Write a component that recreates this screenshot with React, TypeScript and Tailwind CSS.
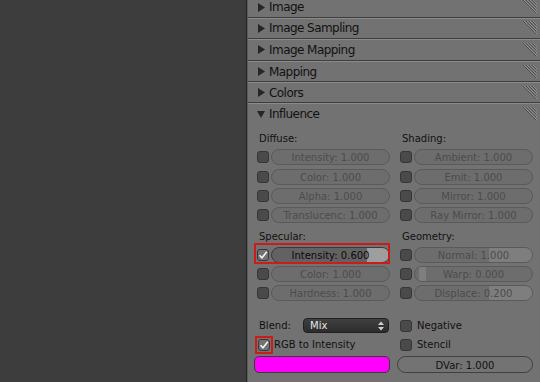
import React from 'react'

type SliderProps = { label: string; active?: boolean; fill?: [number, number] }

const Arrow = ({ open }: { open?: boolean }) =>
  open ? (
    <svg width="8" height="8" viewBox="0 0 8 8" className="shrink-0">
      <path d="M0 1 L8 1 L4 8 Z" fill="#262626" />
    </svg>
  ) : (
    <svg width="8" height="9" viewBox="0 0 8 9" className="shrink-0">
      <path d="M1 0 L8 4.5 L1 9 Z" fill="#262626" />
    </svg>
  )

// drag handle in panel header corner
const Hatch = () => (
  <svg width="15" height="14" viewBox="0 0 15 14" className="ml-auto shrink-0">
    {[0, 1, 2, 3].map((i) => (
      <g key={i}>
        <line x1={1 + 3 * i} y1={0} x2={14} y2={13 - 3 * i} stroke="#505050" strokeWidth="1" />
        <line x1={2 + 3 * i} y1={0} x2={15} y2={13 - 3 * i} stroke="#979797" strokeWidth="0.8" />
      </g>
    ))}
  </svg>
)

const Header = ({ title, open, h }: { title: string; open?: boolean; h: string }) => (
  <div>
    <div className={`flex items-center pl-[9px] pr-[3px] ${h}`}>
      <Arrow open={open} />
      <span className="ml-[4px] text-[12px] tracking-[-0.55px] text-[#111111] leading-none">{title}</span>
      <Hatch />
    </div>
    {!open && (
      <>
        <div className="h-px bg-[#3e3e3e]" />
        <div className="h-px bg-[#8b8b8b]" />
      </>
    )}
  </div>
)

const Checkbox = ({ checked }: { checked?: boolean }) =>
  checked ? (
    <div className="w-3 h-3 shrink-0 rounded-[3px] border border-[#383838] bg-[#727272] flex items-center justify-center">
      <svg width="10" height="10" viewBox="0 0 10 10">
        <path d="M1.5 5.2 L4 7.8 L8.8 1.8" stroke="#f4f4f4" strokeWidth="1.6" fill="none" />
      </svg>
    </div>
  ) : (
    <div className="w-3 h-3 shrink-0 rounded-[3px] border border-[#363636] bg-[#4a4a4a]" />
  )

const Slider = ({ label, active, fill }: SliderProps) => (
  <div
    className={`relative flex-1 h-4 rounded-full overflow-hidden border flex items-center justify-center ${
      active ? 'border-[#3a3a3a] bg-[#626262] text-[#0a0a0a]' : 'border-[#5a5a5a] bg-[#6d6d6d] text-[#4c4c4c]'
    }`}
  >
    {fill && (
      <div
        className={`absolute inset-y-0 ${active ? 'bg-[#9e9e9e]' : 'bg-[#7e7e7e]'}`}
        style={{ left: `${fill[0]}%`, width: `${fill[1] - fill[0]}%` }}
      />
    )}
    <span className="relative mt-[2px] text-[10px] leading-none">{label}</span>
  </div>
)

const Row = ({ h, ...props }: SliderProps & { h: string; checked?: boolean }) => (
  <div className={`${h} flex items-center gap-[2px] pl-[3px]`}>
    <Checkbox checked={props.checked} />
    <Slider label={props.label} active={props.active} fill={props.fill} />
  </div>
)

const Label = ({ text, h }: { text: string; h: string }) => (
  <div className={`${h} flex items-center pt-[3px] pl-[5px] text-[10px] text-[#111111]`}>{text}</div>
)

const Dropdown = () => (
  <div className="w-[86px] h-[15px] rounded-[4px] border border-[#202020] bg-gradient-to-b from-[#404040] to-[#2c2c2c] flex items-center pl-[6px] pr-[4px]">
    <span className="text-[10px] text-[#e6e6e6] leading-none">Mix</span>
    <svg width="6" height="10" viewBox="0 0 6 10" className="ml-auto">
      <path d="M0 4 L3 0.5 L6 4 Z" fill="#cfcfcf" />
      <path d="M0 6 L3 9.5 L6 6 Z" fill="#cfcfcf" />
    </svg>
  </div>
)

export default function App() {
  return (
    <div className="w-[540px] h-[382px] overflow-hidden flex font-['DejaVu_Sans','Liberation_Sans',sans-serif]">
      <div className="w-[246px] bg-[#3d3d3d]" />
      <div className="w-px bg-[#242424]" />
      <div className="w-px bg-[#5c5c5c]" />
      <div className="flex-1 bg-[#727272] flex flex-col">
        <Header title="Image" h="h-[17px] pb-[3px]" />
        <Header title="Image Sampling" h="h-[19px] pb-[1px]" />
        <Header title="Image Mapping" h="h-[20px] pb-[1px]" />
        <Header title="Mapping" h="h-[19px]" />
        <Header title="Colors" h="h-[19px]" />
        <Header title="Influence" open h="h-[19px]" />

        <div className="pt-[4px] pl-[6px] pr-[7px] grid grid-cols-2 gap-x-[7px]">
          {/* left column */}
          <div className="flex flex-col">
            <Label text="Diffuse:" h="h-5" />
            <Row h="h-5" label="Intensity: 1.000" />
            <Row h="h-[19px]" label="Color: 1.000" />
            <Row h="h-[19px]" label="Alpha: 1.000" />
            <Row h="h-5" label="Translucenc: 1.000" />
            <Label text="Specular:" h="h-5" />
            <div className="relative">
              <Row h="h-[19px]" label="Intensity: 0.600" checked active fill={[81, 100]} />
              <div className="absolute -top-[2px] bottom-0 inset-x-0 border-2 border-[#cc1b1b] pointer-events-none" />
            </div>
            <Row h="h-[19px]" label="Color: 1.000" />
            <Row h="h-[19px]" label="Hardness: 1.000" />

            <div className="mt-[14px] h-[19px] flex items-center">
              <span className="w-[49px] pl-[5px] text-[10px] text-[#111111]">Blend:</span>
              <Dropdown />
            </div>
            <div className="h-[19px] flex items-center pl-[4px]">
              <div className="relative">
                <Checkbox checked />
                <div className="absolute -inset-[3px] border-2 border-[#cc1b1b] pointer-events-none" />
              </div>
              <span className="ml-[4px] text-[10px] text-[#111111]">RGB to Intensity</span>
            </div>
            <div className="mt-[2px] h-[17px] rounded-[5px] border border-[#3a3a3a] bg-[#ff00ff]" />
          </div>

          {/* right column */}
          <div className="flex flex-col">
            <Label text="Shading:" h="h-5" />
            <Row h="h-5" label="Ambient: 1.000" />
            <Row h="h-[19px]" label="Emit: 1.000" />
            <Row h="h-[19px]" label="Mirror: 1.000" />
            <Row h="h-5" label="Ray Mirror: 1.000" />
            <Label text="Geometry:" h="h-5" />
            <Row h="h-[19px]" label="Normal: 1.000" fill={[63, 100]} />
            <Row h="h-[19px]" label="Warp: 0.000" fill={[3, 9]} />
            <Row h="h-[19px]" label="Displace: 0.200" fill={[63, 100]} />

            <div className="mt-[14px] h-[19px] flex items-center pl-[3px]">
              <Checkbox />
              <span className="ml-[5px] text-[10px] text-[#111111]">Negative</span>
            </div>
            <div className="h-[19px] flex items-center pl-[3px]">
              <Checkbox />
              <span className="ml-[5px] text-[10px] text-[#111111]">Stencil</span>
            </div>
            <div className="mt-[2px] h-[17px] rounded-full border border-[#404040] bg-[#737373] flex items-center justify-center">
              <span className="mt-[2px] text-[10px] leading-none text-[#111111]">DVar: 1.000</span>
            </div>
          </div>
        </div>
      </div>
    </div>
  )
}
